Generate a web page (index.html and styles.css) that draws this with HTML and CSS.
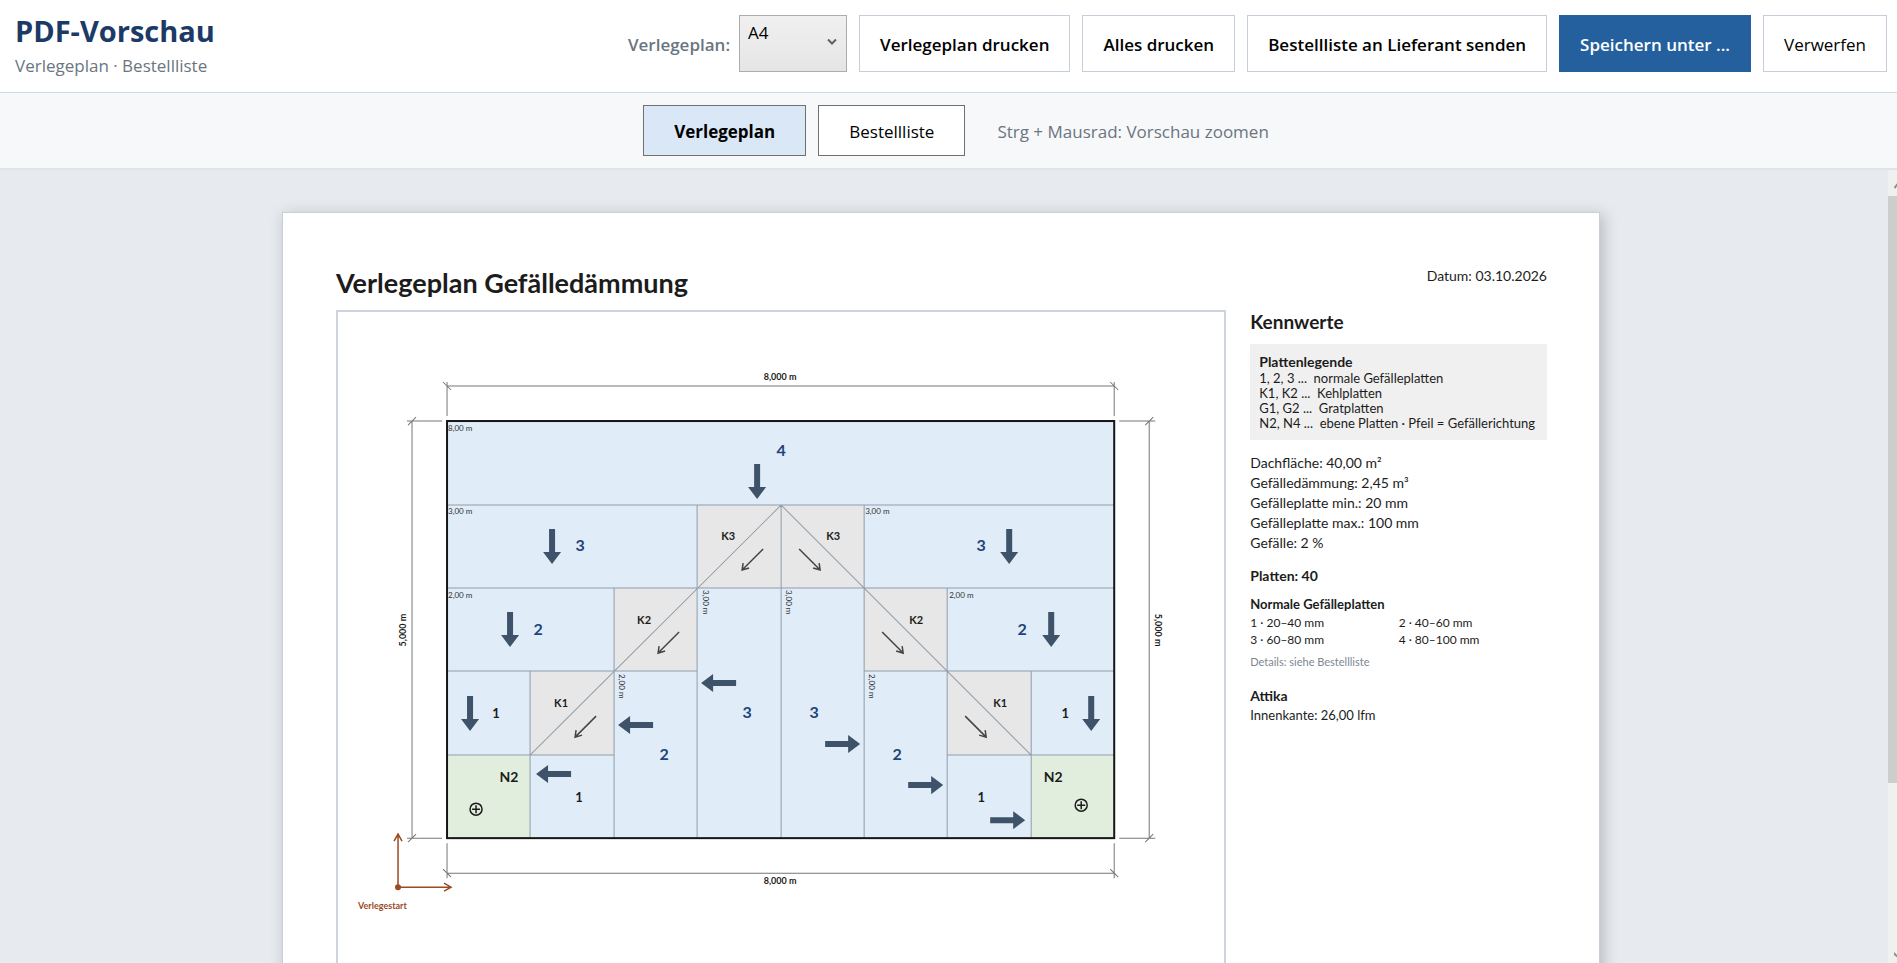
FILE: index.html
```html
<!DOCTYPE html>
<html lang="de">
<head>
<meta charset="utf-8">
<title>PDF-Vorschau</title>
<link rel="stylesheet" href="styles.css">
</head>
<body>
<header class="topbar">
  <div class="brand">
    <h1>PDF-Vorschau</h1>
    <p>Verlegeplan · Bestellliste</p>
  </div>
  <div class="actions">
    <label class="format-label" for="format">Verlegeplan:</label>
    <div class="format">
      <select id="format"><option>A4</option><option>A3</option></select>
      <svg class="chevron" width="10" height="8" viewBox="0 0 10 8" aria-hidden="true"><path d="M1 1.500L5 5.500L9 1.500" fill="none" stroke="#606060" stroke-width="2"/></svg>
    </div>
    <button class="btn strong" type="button">Verlegeplan drucken</button>
    <button class="btn strong" type="button">Alles drucken</button>
    <button class="btn strong" type="button">Bestellliste an Lieferant senden</button>
    <button class="btn primary" type="button">Speichern unter ...</button>
    <button class="btn" type="button">Verwerfen</button>
  </div>
</header>
<nav class="tabs">
  <button class="tab active" type="button">Verlegeplan</button>
  <button class="tab" type="button">Bestellliste</button>
  <span class="hint">Strg + Mausrad: Vorschau zoomen</span>
</nav>
<main class="viewer">
  <div class="canvas">
    <article class="sheet">
      <div class="sheet-head">
        <h2>Verlegeplan Gefälledämmung</h2>
        <span class="date">Datum: 03.10.2026</span>
      </div>
      <div class="sheet-body">
        <div class="plan">
          <svg viewBox="1 1 886 775" role="img" aria-label="Verlegeplan 8,000 m mal 5,000 m">
            <defs>
              <path id="block" d="M-3 -35H3V-12H9L0 0L-9 -12H-3Z"/>
              <path id="thin" d="M21 -21L0 0M1 -7L0 0L7 -2"/>
              <g id="point"><circle r="6"/><path d="M-4 0H4M0 -4V4"/></g>
            </defs>
            <rect class="plate" x="110" y="110" width="667" height="417"/>
            <g class="valley">
              <rect x="360" y="194" width="167" height="83"/>
              <rect x="277" y="277" width="83" height="83"/>
              <rect x="527" y="277" width="83" height="83"/>
              <rect x="193" y="360" width="84" height="84"/>
              <rect x="610" y="360" width="84" height="84"/>
            </g>
            <g class="flat">
              <rect x="110" y="444" width="83" height="83"/>
              <rect x="694" y="444" width="83" height="83"/>
            </g>
            <path class="seam" d="M110 194H777M110 277H777M110 360H360M527 360H777M110 444H277M610 444H777M193 360V527M277 277V527M360 194V527M444 194V527M527 194V527M610 277V527M694 360V527M444 194L193 444M444 194L694 444"/>
            <g class="note">
              <text x="111" y="120">8,00 m</text>
              <text x="111" y="203">3,00 m</text>
              <text x="111" y="287">2,00 m</text>
              <text x="528" y="203">3,00 m</text>
              <text x="612" y="287">2,00 m</text>
              <text transform="translate(366 279) rotate(90)">3,00 m</text>
              <text transform="translate(449 279) rotate(90)">3,00 m</text>
              <text transform="translate(282 363) rotate(90)">2,00 m</text>
              <text transform="translate(532 363) rotate(90)">2,00 m</text>
            </g>
            <rect class="outline" x="110" y="110" width="667" height="417"/>
            <g class="dim">
              <path d="M110 75H777M110 71V105M777 71V105M106 71L114 79M773 71L781 79"/>
              <path d="M110 562H777M110 532V567M777 532V567M106 558L114 566M773 558L781 566"/>
              <path d="M75 110V527M70 110H105M70 527H105M71 114L79 106M71 531L79 523"/>
              <path d="M812 110V527M782 110H818M782 527H818M808 114L816 106M808 531L816 523"/>
            </g>
            <g class="measure">
              <text x="443" y="69">8,000 m</text>
              <text x="443" y="573">8,000 m</text>
              <text transform="translate(69 319) rotate(-90)">5,000 m</text>
              <text transform="translate(818 319) rotate(90)">5,000 m</text>
            </g>
            <g class="big">
              <text x="444" y="145">4</text>
              <text x="243" y="240">3</text><text x="644" y="240">3</text>
              <text x="201" y="324">2</text><text x="685" y="324">2</text>
              <text x="410" y="407">3</text><text x="477" y="407">3</text>
              <text x="327" y="449">2</text><text x="560" y="449">2</text>
            </g>
            <g class="small">
              <text x="159" y="407">1</text><text x="728" y="407">1</text>
              <text x="242" y="491">1</text><text x="644" y="491">1</text>
            </g>
            <g class="level">
              <text x="172" y="471">N2</text><text x="716" y="471">N2</text>
            </g>
            <g class="key">
              <text x="391" y="229">K3</text><text x="496" y="229">K3</text>
              <text x="307" y="313">K2</text><text x="579" y="313">K2</text>
              <text x="224" y="396">K1</text><text x="663" y="396">K1</text>
            </g>
            <g class="fall">
              <use href="#block" x="420" y="188"/>
              <use href="#block" x="215" y="253"/><use href="#block" x="672" y="253"/>
              <use href="#block" x="173" y="336"/><use href="#block" x="714" y="336"/>
              <use href="#block" x="133" y="420"/><use href="#block" x="754" y="420"/>
              <use href="#block" transform="translate(364 372) rotate(90)"/>
              <use href="#block" transform="translate(281 414) rotate(90)"/>
              <use href="#block" transform="translate(199 463) rotate(90)"/>
              <use href="#block" transform="translate(523 433) rotate(-90)"/>
              <use href="#block" transform="translate(606 474) rotate(-90)"/>
              <use href="#block" transform="translate(688 509) rotate(-90)"/>
            </g>
            <g class="drain">
              <use href="#thin" x="405" y="259"/>
              <use href="#thin" x="321" y="342"/>
              <use href="#thin" x="238" y="426"/>
              <use href="#thin" transform="translate(483 259) scale(-1 1)"/>
              <use href="#thin" transform="translate(566 342) scale(-1 1)"/>
              <use href="#thin" transform="translate(649 426) scale(-1 1)"/>
            </g>
            <g class="point">
              <use href="#point" x="139" y="498"/>
              <use href="#point" x="744" y="494"/>
            </g>
            <g class="start">
              <path d="M61 576V523M57 530L61 523L65 530M61 576H114M107 572L114 576L107 580"/>
              <circle cx="61" cy="576" r="3"/>
              <text x="21" y="598">Verlegestart</text>
            </g>
          </svg>
        </div>
        <aside class="facts">
          <h3>Kennwerte</h3>
          <div class="legend">
            <h4>Plattenlegende</h4>
            <p>1, 2, 3 ...&nbsp; normale Gefälleplatten</p>
            <p>K1, K2 ...&nbsp; Kehlplatten</p>
            <p>G1, G2 ...&nbsp; Gratplatten</p>
            <p>N2, N4 ...&nbsp; ebene Platten · Pfeil = Gefällerichtung</p>
          </div>
          <div class="values">
            <p>Dachfläche: 40,00 m²</p>
            <p>Gefälledämmung: 2,45 m³</p>
            <p>Gefälleplatte min.: 20 mm</p>
            <p>Gefälleplatte max.: 100 mm</p>
            <p>Gefälle: 2 %</p>
          </div>
          <h4 class="total">Platten: 40</h4>
          <h5>Normale Gefälleplatten</h5>
          <div class="sizes">
            <span>1 · 20–40 mm</span><span>2 · 40–60 mm</span>
            <span>3 · 60–80 mm</span><span>4 · 80–100 mm</span>
          </div>
          <p class="details">Details: siehe Bestellliste</p>
          <h4 class="edge">Attika</h4>
          <p class="edge-value">Innenkante: 26,00 lfm</p>
        </aside>
      </div>
    </article>
  </div>
  <div class="scrollbar" aria-hidden="true">
    <svg viewBox="0 0 9 26"><path d="M6 17L10 12V15L7 19Z"/></svg>
    <div class="thumb"></div>
    <svg viewBox="0 0 9 26"><path d="M6 15L10 19V21L6 18Z"/></svg>
  </div>
</main>
</body>
</html>
```

FILE: styles.css
```css
* { box-sizing: border-box; }
h1, h2, h3, h4, h5, p { margin: 0; }
body {
  margin: 0;
  height: 100vh;
  display: flex;
  flex-direction: column;
  overflow: hidden;
  background: #e7eaee;
  color: #000;
  font: 17px/24px "Open Sans", sans-serif;
}
button, select { font: inherit; color: inherit; }

.topbar {
  flex: none;
  display: flex;
  justify-content: space-between;
  align-items: flex-start;
  height: 93px;
  padding: 15px 10px 0 15px;
  background: #fff;
  border-bottom: 1px solid #d3dae3;
}
.brand h1 {
  color: #1b3a66;
  font-size: 29px;
  line-height: 32px;
  font-weight: 700;
}
.brand p { color: #6b7580; margin-top: 7px; }
.actions { display: flex; align-items: center; gap: 12px; }
.format-label { color: #6b7580; font-weight: 600; margin-right: -3px; padding-top: 2px; }
.format { position: relative; }
.format select {
  display: block;
  appearance: none;
  width: 108px;
  height: 57px;
  padding: 0 8px 22px;
  border: 1px solid #acacac;
  border-radius: 0;
  background: linear-gradient(#f0f0f0, #e5e5e5);
}
.chevron { position: absolute; right: 10px; top: 23px; pointer-events: none; }
.btn {
  height: 57px;
  padding: 2px 20px 0;
  border: 1px solid #c5ced9;
  background: #fff;
  white-space: nowrap;
}
.btn.strong { font-weight: 600; }
.btn.primary { background: #245f9e; border-color: #245f9e; color: #fff; font-weight: 600; }

.tabs {
  flex: none;
  display: flex;
  justify-content: center;
  align-items: center;
  gap: 12px;
  padding: 12px 0 12px 15px;
  background: #f7f8fa;
  border-bottom: 2px solid #dfe3ea;
}
.tab {
  height: 51px;
  padding: 2px 30px 0;
  border: 1px solid #707070;
  background: #fff;
}
.tab.active { background: #dae7f6; font-weight: 700; }
.hint { margin-left: 20px; padding-top: 2px; color: #6b7580; }

.viewer { flex: 1; min-height: 0; display: flex; }
.canvas { flex: 1; padding: 42px 288px 42px 282px; overflow: hidden; }
.sheet {
  padding: 53px 52px 53px 53px;
  border: 1px solid #c9cfd6;
  background: #fff;
  box-shadow: 3px 3px 14px rgba(30, 40, 50, 0.25);
  color: #1c1c1c;
  font: 14px/20px Lato, sans-serif;
}
.sheet-head {
  display: flex;
  justify-content: space-between;
  align-items: flex-start;
  margin-bottom: 10px;
}
.sheet-head h2 { font-size: 27px; line-height: 34px; }
.sheet-body { display: grid; grid-template-columns: 3fr 1fr; gap: 24px; }
.plan { border: 2px solid #cdd4dd; }
.plan svg { display: block; width: 100%; }
.plan text { font-family: Lato, sans-serif; }

.plate { fill: #e0ecf8; }
.valley { fill: #e7e7e7; }
.flat { fill: #e2eedd; }
.seam { fill: none; stroke: #8f9daa; stroke-width: 1; }
.outline { fill: none; stroke: #151515; stroke-width: 2; }
.note { fill: #333; font-size: 8px; }
.dim { fill: none; stroke: #777; stroke-width: 1; }
.measure { fill: #1c1c1c; font-size: 9px; font-weight: 700; text-anchor: middle; }
.big, .small, .level, .key { font-weight: 700; text-anchor: middle; fill: #1c1c1c; }
.big { fill: #21447a; font-size: 16px; }
.small { font-size: 13px; }
.level { font-size: 14px; }
.key { font-size: 11px; }
.fall { fill: #3e5369; }
.drain { fill: none; stroke: #444; stroke-width: 1.5; }
.point { fill: none; stroke: #1c1c1c; stroke-width: 1.5; }
.start { fill: #9c4a1f; }
.start path { fill: none; stroke: #9c4a1f; stroke-width: 1.5; }
.start text { font-size: 9px; font-weight: 700; }

.facts h3 { font-size: 19px; line-height: 24px; margin-bottom: 10px; }
.facts h4 { font-size: 14px; line-height: 20px; }
.facts h5 { font-size: 13px; line-height: 18px; margin: 9px 0 1px; }
.legend { padding: 9px; background: #f0f0f0; font-size: 13px; line-height: 15px; }
.legend h4 { font-size: 14px; line-height: 18px; }
.values { margin: 13px 0; }
.sizes {
  display: grid;
  grid-template-columns: 1fr 1fr;
  font-size: 12px;
  line-height: 17px;
}
.details { margin: 5px 0 16px; color: #7d8791; font-size: 11px; line-height: 17px; }
.edge-value { font-size: 13px; line-height: 18px; }

.scrollbar {
  flex: none;
  width: 9px;
  display: flex;
  flex-direction: column;
  background: #f0f0f0;
}
.scrollbar svg { flex: none; display: block; width: 9px; height: 26px; fill: #8a8a8a; }
.thumb { flex: 0 0 74%; background: #cdcdcd; margin-bottom: auto; }
```
